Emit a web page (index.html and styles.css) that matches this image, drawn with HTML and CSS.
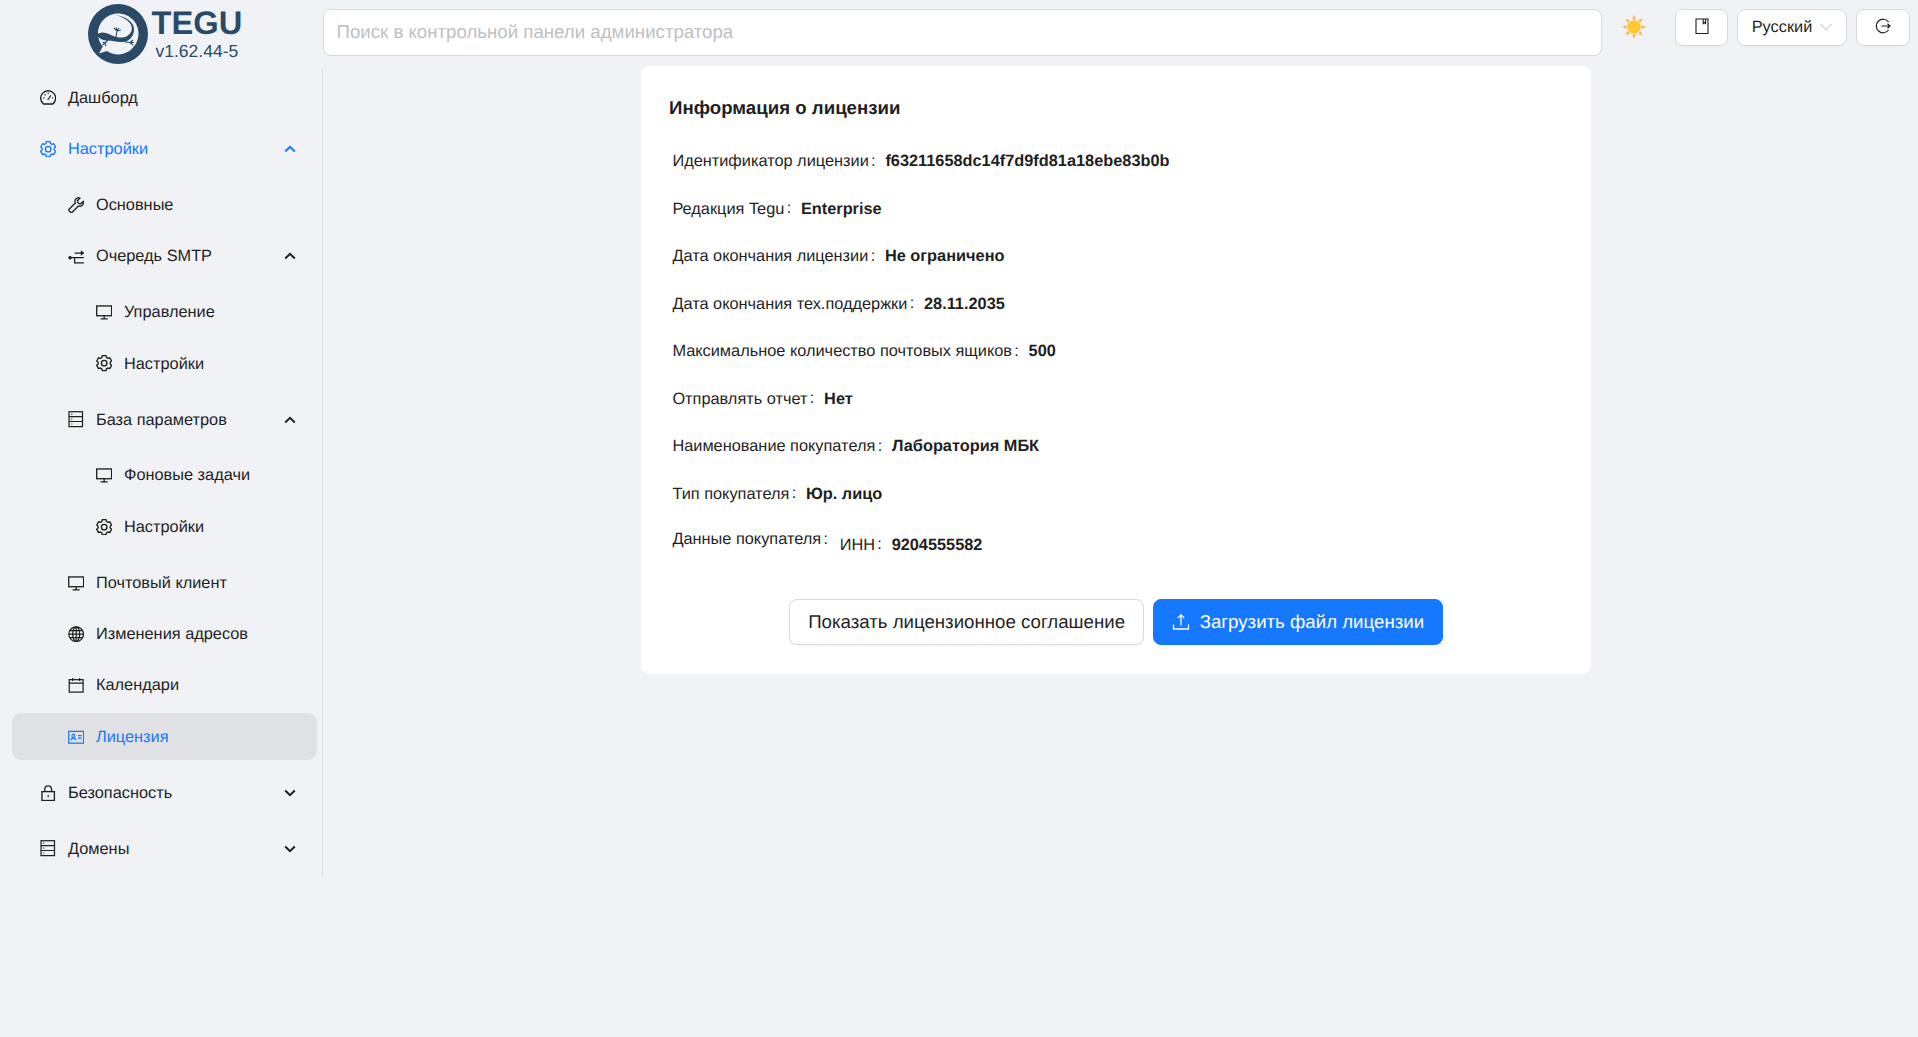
FILE: index.html
```html
<!DOCTYPE html>
<html lang="ru">
	<head>
		<meta charset="UTF-8">
		<title>Tegu</title>
		<link rel="stylesheet" href="styles.css">
	</head>
	<body>
		<svg class="defs" width="0" height="0">
			<defs>
				<g id="i-gear" fill="none" stroke="currentColor" stroke-width="1.35" stroke-linejoin="round">
					<path d="M6.16 .63H9.84L10.25 2.44 11.69 3.27 13.47 2.72 15.3 5.9 13.94 7.17V8.83L15.3 10.1 13.47 13.28 11.69 12.73 10.25 13.56 9.84 15.37H6.16L5.75 13.56 4.31 12.73 2.53 13.28 .7 10.1 2.06 8.83V7.17L.7 5.9 2.53 2.72 4.31 3.27 5.75 2.44z"/>
					<circle cx="8" cy="8" r="2.7"/>
				</g>
				<g id="i-desktop" fill="none" stroke="currentColor" stroke-width="1.3">
					<rect x=".7" y="1.900" width="14.600" height="9.600"/>
					<path d="M8 11.500v3M4.500 14.500h7"/>
				</g>
				<g id="i-db" fill="none" stroke="currentColor" stroke-width="1.2">
					<rect x="1" y=".7" width="13.200" height="14.600"/>
					<path d="M1 5.500h13.200M1 10.300h13.200"/>
					<path d="M3.200 3.100h1M3.200 8h1M3.200 12.800h1" stroke-width="1.100"/>
				</g>
			</defs>
		</svg>

		<header class="topbar">
			<div class="brand">
				<svg class="logo" viewBox="0 0 60 60">
					<path fill="#2a4a68" fill-rule="evenodd" d="M30 0a30 30 0 1 1 0 60 30 30 0 0 1 0-60zM30 9.500C19 9.500 10 18.500 10 29.500c0 5 1.800 9.500 4.800 13L11 49.500 19 47c3.200 2.200 7 3.500 11 3.500 11 0 20.500-9.500 20.500-21S41 9.500 30 9.500z"/>
					<path fill="#2a4a68" d="M9 31C11 28 15 28 18 29C22 30 26 33 31 33.500C37 34 41 32 43.500 27C45.500 21 40 14 27 11C38 12.500 47 18 46 27C45 33 41 37.500 35 38C29 38.500 24 36.500 20 36.500C15 36.500 11 35 9 31Z"/>
					<path fill="none" stroke="#2a4a68" stroke-width="1.100" d="M28 33L29 27M29 27L26 24M29 27L28.500 23.500M29 27L31 24M29 27L33 26M20 36L17 39M17 39L14.500 38M17 39L14.500 41M17 39L18 42M37 38L42 38.500M42 38.500L45 36M42 38.500L46 38.500M42 38.500L45 41"/>
				</svg>
				<div class="brand-text">
					<div class="brand-name">TEGU</div>
					<div class="brand-ver">v1.62.44-5</div>
				</div>
			</div>
			<input class="search" type="text" placeholder="Поиск в контрольной панели администратора">
			<svg class="sun" viewBox="0 0 24 24" width="24" height="24">
				<path fill="#f4b860" d="M12 0l2 4.500h-4zM12 24l-2-4.500h4zM0 12l4.500-2v4zM24 12l-4.500 2v-4zM3.500 3.500l4.600 1.800-2.800 2.800zM20.500 20.500l-4.600-1.800 2.800-2.800zM20.500 3.500l-1.800 4.600-2.800-2.800zM3.500 20.500l1.800-4.600 2.800 2.800z"/>
				<circle cx="12" cy="12" r="6.800" fill="#fdc92f"/>
			</svg>
			<button class="tool-btn book-btn">
				<svg viewBox="0 0 14 16" width="14" height="16" fill="none" stroke="#1f1f1f" stroke-width="1.100"><path d="M1 1h12v14.500H1zM8.200 1v4.500l1.200-1 1.200 1V1"/></svg>
			</button>
			<button class="tool-btn lang-btn">
				<span>Русский</span>
				<svg viewBox="0 0 12 8" width="12" height="8" fill="none" stroke="#b5b5b5" stroke-width="1"><path d="M.5 1L6 6.800 11.500 1"/></svg>
			</button>
			<button class="tool-btn exit-btn">
				<svg viewBox="0 0 16 16" width="16" height="16" fill="none" stroke="#1f1f1f" stroke-width="1.200"><path d="M13.600 4A6.800 6.800 0 1 0 13.600 12M6.500 8h8.500M12.500 5.800L15 8l-2.500 2.200" /></svg>
			</button>
		</header>

		<div class="main">
			<nav class="sidebar">
				<ul class="menu">
					<li class="item">
						<svg class="ico" viewBox="0 0 16 16" fill="none" stroke="currentColor" stroke-width="1.400" stroke-linejoin="round"><path d="M3.400 14.700A7.300 7.300 0 1 1 12.600 14.700z"/><path d="M7.500 10.800l3.200-4.500M3.100 8.800h1.400M11.600 8.800h1.400M8 3.600v1.400M4.500 5.200l1 1" stroke-width="1.100"/></svg>
						<span>Дашборд</span>
					</li>
					<li class="submenu">
						<div class="item open-blue">
							<svg class="ico" viewBox="0 0 16 16"><use href="#i-gear"/></svg>
							<span>Настройки</span>
							<svg class="chev" viewBox="0 0 12 8"><path d="M1.200 6.500L6 1.800l4.800 4.700"/></svg>
						</div>
						<ul class="sublist">
							<li class="item lvl2">
								<svg class="ico" viewBox="0 0 16 16" fill="none" stroke="currentColor" stroke-width="1.300" stroke-linejoin="round"><path d="M15 4.200l-2.700 2.600-2.300-.8-.8-2.300L11.800 1C9.800.3 7.600 1 7 3c-.3 1-.2 2 .2 2.800L1.300 11.700a1.500 1.500 0 0 0 0 2.100l.9.900a1.500 1.500 0 0 0 2.100 0l5.900-5.900c2.500 1 5.600-1 4.800-4.600z"/></svg>
								<span>Основные</span>
							</li>
							<li class="submenu">
								<div class="item lvl2">
									<svg class="ico" viewBox="0 0 16 16" fill="none" stroke="currentColor" stroke-width="1.200"><circle cx="2" cy="9.500" r="1.100" fill="currentColor"/><path d="M2 9.500h13.500M6.500 5h9M6.500 9.500v5h9"/><path d="M12.800 2.800L15.300 5l-2.500 2.200z" fill="currentColor" stroke-width=".6"/></svg>
									<span>Очередь SMTP</span>
									<svg class="chev" viewBox="0 0 12 8"><path d="M1.200 6.500L6 1.800l4.800 4.700"/></svg>
								</div>
								<ul class="sublist">
									<li class="item lvl3">
										<svg class="ico" viewBox="0 0 16 16"><use href="#i-desktop"/></svg>
										<span>Управление</span>
									</li>
									<li class="item lvl3">
										<svg class="ico" viewBox="0 0 16 16"><use href="#i-gear"/></svg>
										<span>Настройки</span>
									</li>
								</ul>
							</li>
							<li class="submenu">
								<div class="item lvl2">
									<svg class="ico" viewBox="0 0 16 16"><use href="#i-db"/></svg>
									<span>База параметров</span>
									<svg class="chev" viewBox="0 0 12 8"><path d="M1.200 6.500L6 1.800l4.800 4.700"/></svg>
								</div>
								<ul class="sublist">
									<li class="item lvl3">
										<svg class="ico" viewBox="0 0 16 16"><use href="#i-desktop"/></svg>
										<span>Фоновые задачи</span>
									</li>
									<li class="item lvl3">
										<svg class="ico" viewBox="0 0 16 16"><use href="#i-gear"/></svg>
										<span>Настройки</span>
									</li>
								</ul>
							</li>
							<li class="item lvl2">
								<svg class="ico" viewBox="0 0 16 16"><use href="#i-desktop"/></svg>
								<span>Почтовый клиент</span>
							</li>
							<li class="item lvl2">
								<svg class="ico" viewBox="0 0 16 16" fill="none" stroke="currentColor" stroke-width="1.200"><circle cx="8" cy="8" r="7.200"/><ellipse cx="8" cy="8" rx="3.400" ry="7.200"/><path d="M8 .8v14.400M.8 8h14.400M1.800 4.500h12.400M1.800 11.500h12.400"/></svg>
								<span>Изменения адресов</span>
							</li>
							<li class="item lvl2">
								<svg class="ico" viewBox="0 0 16 16" fill="none" stroke="currentColor" stroke-width="1.200"><rect x="1.200" y="2.600" width="13.600" height="12.200"/><path d="M1.200 6h13.600M4.600 1v3M11.400 1v3"/></svg>
								<span>Календари</span>
							</li>
							<li class="item lvl2 active">
								<svg class="ico" viewBox="0 0 16 16" fill="none" stroke="currentColor" stroke-width="1.200"><rect x=".7" y="2.300" width="14.600" height="11.600"/><circle cx="5.300" cy="6.800" r="1.500"/><path d="M2.800 11c.3-2.300 4.700-2.300 5 0M9.800 6.500h3.600M9.800 9h3.600"/></svg>
								<span>Лицензия</span>
							</li>
						</ul>
					</li>
					<li class="submenu">
						<div class="item">
							<svg class="ico" viewBox="0 0 16 16" fill="none" stroke="currentColor" stroke-width="1.300"><rect x="1.900" y="6.500" width="12.200" height="8.700"/><path d="M4.700 6.500V4a3.300 3.200 0 0 1 6.600 0V6.500M8 10v2" /></svg>
							<span>Безопасность</span>
							<svg class="chev" viewBox="0 0 12 8"><path d="M1.200 1.500L6 6.200l4.800-4.700"/></svg>
						</div>
					</li>
					<li class="submenu">
						<div class="item">
							<svg class="ico" viewBox="0 0 16 16"><use href="#i-db"/></svg>
							<span>Домены</span>
							<svg class="chev" viewBox="0 0 12 8"><path d="M1.200 1.500L6 6.200l4.800-4.700"/></svg>
						</div>
					</li>
				</ul>
			</nav>

			<section class="content">
				<div class="card">
					<h2 class="card-title">Информация о лицензии</h2>
					<div class="row"><span class="label">Идентификатор лицензии</span><b>f63211658dc14f7d9fd81a18ebe83b0b</b></div>
					<div class="row"><span class="label">Редакция Tegu</span><b>Enterprise</b></div>
					<div class="row"><span class="label">Дата окончания лицензии</span><b>Не ограничено</b></div>
					<div class="row"><span class="label">Дата окончания тех.поддержки</span><b>28.11.2035</b></div>
					<div class="row"><span class="label">Максимальное количество почтовых ящиков</span><b>500</b></div>
					<div class="row"><span class="label">Отправлять отчет</span><b>Нет</b></div>
					<div class="row"><span class="label">Наименование покупателя</span><b>Лаборатория МБК</b></div>
					<div class="row"><span class="label">Тип покупателя</span><b>Юр. лицо</b></div>
					<div class="row row-last">
						<span class="label">Данные покупателя</span>
						<span class="inn"><span class="label">ИНН</span><b>9204555582</b></span>
					</div>
					<div class="actions">
						<button class="btn">Показать лицензионное соглашение</button>
						<button class="btn btn-primary">
							<svg viewBox="0 0 18 18" width="18" height="18" fill="none" stroke="#fff" stroke-width="1.300"><path d="M1.500 11.500v4.500h15v-4.500M9 12.500V2M5.800 5L9 1.800 12.200 5"/></svg>
							Загрузить файл лицензии
						</button>
					</div>
				</div>
			</section>
		</div>
	</body>
</html>
```

FILE: styles.css
```css
*{
	padding:0;
	margin:0;
	box-sizing:border-box;
}
ul,li{
	list-style:none;
}
html,body{
	height:100%;
}
body{
	background:#f0f2f6;
	color:#1f1f1f;
	font-family:"Liberation Sans",Arial,sans-serif;
	font-size:16.33px;
	text-rendering:geometricPrecision;
	overflow:hidden;
}
.defs{
	position:absolute;
}
button,input{
	font-family:inherit;
	text-rendering:geometricPrecision;
}
button{
	cursor:pointer;
}

/* top */
.topbar{
	height:66px;
	display:flex;
	align-items:flex-start;
}
.brand{
	width:323px;
	height:66px;
	padding:4px 0 0 88px;
	display:flex;
	gap:3.500px;
	flex:none;
}
.logo{
	width:60px;
	height:60px;
	flex:none;
}
.brand-text{
	color:#2a4a68;
	text-align:center;
}
.brand-name{
	font-size:32.67px;
	font-weight:bold;
	line-height:36px;
	margin-top:1px;
}
.brand-ver{
	font-size:17.500px;
	line-height:21px;
}
.search{
	width:1279px;
	height:47px;
	margin-top:9px;
	padding:0 12.500px 2px;
	flex:none;
	border:1px solid #d9d9d9;
	border-radius:8px;
	background:#fff;
	font-size:18.67px;
	outline:none;
}
.search::placeholder{
	color:#bfbfbf;
}
.sun{
	margin:15px 0 0 20px;
	flex:none;
}
.tool-btn{
	height:37px;
	margin-top:9px;
	border:1px solid #d9d9d9;
	border-radius:8px;
	background:#fff;
	box-shadow:0 1px 0 rgba(0,0,0,0.03);
	display:flex;
	align-items:center;
	justify-content:center;
	flex:none;
	color:#1f1f1f;
	font-size:16.33px;
}
.book-btn{
	width:53px;
	margin-left:29px;
	padding-bottom:4px;
}
.lang-btn{
	width:110px;
	margin-left:9px;
	gap:8px;
	padding-bottom:1px;
}
.exit-btn{
	width:54px;
	margin-left:9px;
	padding-bottom:4px;
}

/* layout */
.main{
	display:flex;
	align-items:flex-start;
}
.sidebar{
	width:323px;
	margin-top:2px;
	height:810px;
	padding:6.300px 5px 0 12px;
	flex:none;
	border-right:1px solid #dfe1e5;
}
.menu,.sublist{
	display:flex;
	flex-direction:column;
	gap:4.67px;
}
.sublist{
	padding-top:9.33px;
}
.submenu{
	padding-bottom:4.67px;
}
.item{
	height:46.67px;
	padding:0 21px 0 28px;
	display:flex;
	align-items:center;
	border-radius:9.33px;
	line-height:24px;
}
.item.lvl2{
	padding-left:56px;
}
.item.lvl3{
	padding-left:84px;
}
.ico{
	width:16.33px;
	height:16.33px;
	margin-right:11.67px;
	flex:none;
}
.chev{
	width:12px;
	height:8px;
	margin-left:auto;
	fill:none;
	stroke:#1f1f1f;
	stroke-width:2;
}
.open-blue{
	color:#1677ff;
}
.open-blue .chev{
	stroke:#1677ff;
}
.active{
	background:#e0e1e5;
	color:#1677ff;
}

/* license card */
.content{
	padding-left:318px;
}
.card{
	width:950px;
	height:608px;
	padding:30px 28px 0;
	background:#fff;
	border-radius:8px;
}
.card-title{
	font-size:18.67px;
	line-height:24px;
	font-weight:bold;
	margin-bottom:17.400px;
}
.row{
	height:47.500px;
	padding-left:3.400px;
	display:flex;
	align-items:center;
	line-height:24px;
}
.row b{
	font-weight:bold;
}
.label::after{
	content:":";
	position:relative;
	top:-0.5px;
	margin:0 9.730px 0 2.33px;
}
.row-last{
	height:52px;
	align-items:flex-start;
	padding-top:10px;
}
.inn{
	margin:5.500px 0 0 2px;
}
.actions{
	margin-top:30px;
	margin-left:120px;
	display:flex;
	gap:9px;
}
.btn{
	height:46px;
	padding:0 18.17px;
	border:1px solid #d9d9d9;
	border-radius:8px;
	background:#fff;
	box-shadow:0 2px 0 rgba(0,0,0,0.02);
	color:#1f1f1f;
	font-size:18.67px;
	display:flex;
	align-items:center;
	gap:9.33px;
}
.btn-primary{
	background:#1677ff;
	border-color:#1677ff;
	color:#fff;
}
```
